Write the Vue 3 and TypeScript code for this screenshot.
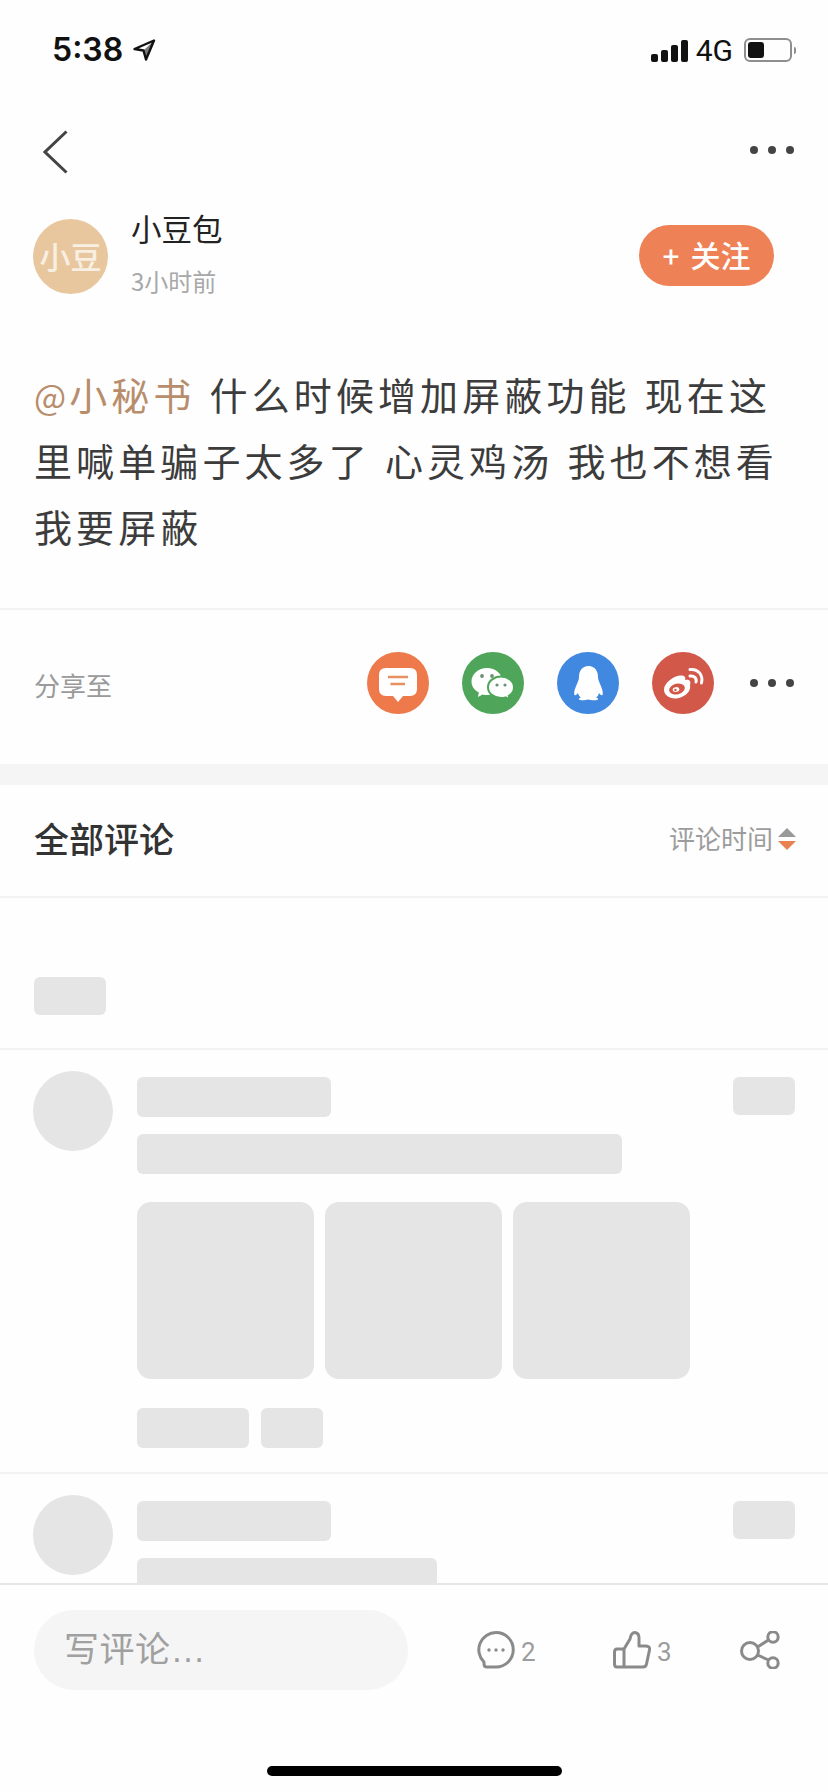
<template>
  <div class="page">
    <div class="status">
      <span class="clock">5:38</span>
      <svg class="loc" width="23" height="22" viewBox="0 0 23 22">
        <path d="M21 1.5 L1.5 10 L10.5 11.5 L13 20.5 Z" fill="none" stroke="#111" stroke-width="2.4" stroke-linejoin="round" />
        <path d="M21 1.5 L10.5 11.5 L13 20.5 Z" fill="#111" opacity="0.55" />
      </svg>
      <span class="grow"></span>
      <div class="signal">
        <i v-for="h in signal" :key="h" :style="{ height: h + 'px' }"></i>
      </div>
      <span class="net">4G</span>
      <div class="battery"><i></i></div>
      <span class="battery-tip"></span>
    </div>

    <div class="nav">
      <svg width="26" height="44" viewBox="0 0 26 44">
        <path d="M23.5 1.5 L2 22 L23.5 42.5" fill="none" stroke="#444" stroke-width="3" />
      </svg>
      <div class="dots"><i></i><i></i><i></i></div>
    </div>

    <div class="scroll">
      <div class="author">
        <div class="avatar">小豆</div>
        <div class="author-info">
          <div class="author-name">小豆包</div>
          <div class="author-time">3小时前</div>
        </div>
        <div class="follow"><span class="plus">+</span>关注</div>
      </div>

      <div class="post">
        <span class="mention"><span class="at">@</span>小秘书</span> 什么时候增加屏蔽功能 现在这里喊单骗子太多了 心灵鸡汤 我也不想看我要屏蔽
      </div>

      <div class="share">
        <span class="share-label">分享至</span>
        <div class="share-icons">
          <svg width="62" height="62" viewBox="0 0 62 62">
            <circle cx="31" cy="31" r="31" fill="#ee7a4b" />
            <path d="M19 16 H43 Q50 16 50 23 V37 Q50 44 43 44 H36 L31 50 L26 44 H19 Q12 44 12 37 V23 Q12 16 19 16Z" fill="#fff" />
            <path d="M21 25 H41 M23.5 32 H38" stroke="#e8905f" stroke-width="2.4" />
          </svg>
          <svg width="62" height="62" viewBox="0 0 62 62">
            <circle cx="31" cy="31" r="31" fill="#4fa65a" />
            <path d="M25 16 C33.5 16 40.5 22 40.5 29.5 C40.5 37 33.5 43 25 43 C23.5 43 22 42.8 20.6 42.4 L16 45 L16.8 40.6 C12.4 38.2 9.5 34.2 9.5 29.5 C9.5 22 16.5 16 25 16Z" fill="#fff" />
            <path d="M39 24.5 C46.2 24.5 52 29.3 52 35.2 C52 38.8 50 41.8 46.8 43.8 L47.5 47.5 L43.6 45.4 C42.2 45.8 40.6 46 39 46 C31.8 46 26 41.2 26 35.2 C26 29.3 31.8 24.5 39 24.5Z" fill="#fff" stroke="#4fa65a" stroke-width="2" />
            <circle cx="20" cy="24" r="1.9" fill="#6e8f72" />
            <circle cx="30" cy="24" r="1.9" fill="#6e8f72" />
            <circle cx="35" cy="33" r="1.6" fill="#6e8f72" />
            <circle cx="43" cy="33" r="1.6" fill="#6e8f72" />
          </svg>
          <svg width="62" height="62" viewBox="0 0 62 62">
            <circle cx="31" cy="31" r="31" fill="#4088e0" />
            <path d="M31.5 14 C25 14 22 19 22 25 C22 28 21 29 20 32 C18 36 16.5 41 17.5 43 C18.5 44 20 42.5 21 41 C21.5 43 22.5 44.5 24 45.5 C22 46 21 47 23 48 C26 48.5 29 48 31 47.5 C33 48 37 48.5 40 48 C42 47 41 46 39 45.5 C40.5 44.5 41.5 43 42 41 C43 42.5 44.5 44 45.5 43 C46.5 41 45 36 43 32 C42 29 41 28 41 25 C41 19 38 14 31.5 14Z" fill="#fff" />
          </svg>
          <svg width="62" height="62" viewBox="0 0 62 62">
            <circle cx="31" cy="31" r="31" fill="#d2594a" />
            <path d="M12 37.5 C12 31 22 23 30 23.5 C34 24 33.5 27 33 28 C37 27 39.5 29 38 33 C39.5 41 30 46.5 23 46.5 C17 46.5 12 43 12 37.5Z" fill="#fff" />
            <ellipse cx="25" cy="37" rx="8" ry="5.4" transform="rotate(-14 25 37)" fill="#d2594a" />
            <ellipse cx="24" cy="37.5" rx="3.4" ry="2.4" transform="rotate(-14 24 37.5)" fill="#fff" />
            <circle cx="23.4" cy="38" r="1.2" fill="#d2594a" />
            <path d="M38 17.5 C46 16.5 51.5 23 49.5 31 M38 24 C42 23.5 45 26 44 30" fill="none" stroke="#fff" stroke-width="3" stroke-linecap="round" />
          </svg>
        </div>
        <div class="dots"><i></i><i></i><i></i></div>
      </div>

      <div class="band"></div>

      <div class="comments-head">
        <span class="comments-title">全部评论</span>
        <span class="sort-label">评论时间</span>
        <span class="sort"><i class="up"></i><i class="down"></i></span>
      </div>

      <div class="tag-row"><div class="bone tag"></div></div>

      <div v-for="item in comments" :key="item.id" class="comment">
        <div class="comment-avatar"></div>
        <div class="comment-main">
          <div class="bone name"></div>
          <div class="bone line" :style="{ width: item.line + 'px' }"></div>
          <template v-if="item.images">
            <div class="images">
              <div v-for="n in 3" :key="n" class="bone image"></div>
            </div>
            <div class="foot">
              <div class="bone foot-a"></div>
              <div class="bone foot-b"></div>
            </div>
          </template>
        </div>
        <div class="bone stamp"></div>
      </div>
    </div>

    <div class="bottom">
      <div class="bottom-row">
        <div class="input-cell"><div class="input">写评论…</div></div>
        <div class="action">
          <svg width="38" height="38" viewBox="0 0 38 38" fill="none" stroke="#8a8a8a" stroke-width="3">
            <path d="M19 1.5 A17.2 17.2 0 0 1 19 36 H10 C8 36 7 35 7 33 V31 A17.2 17.2 0 0 1 19 1.5Z" stroke-linejoin="round" />
            <circle cx="12" cy="19" r="1.7" fill="#8a8a8a" stroke="none" />
            <circle cx="19" cy="19" r="1.7" fill="#8a8a8a" stroke="none" />
            <circle cx="26" cy="19" r="1.7" fill="#8a8a8a" stroke="none" />
          </svg>
          <span>2</span>
        </div>
        <div class="action">
          <svg width="38" height="38" viewBox="0 0 38 38" fill="none" stroke="#8a8a8a" stroke-width="3" stroke-linejoin="round">
            <path d="M11 18 L17 8 Q18 1.5 22 1.5 Q26 2 26 7 V15 H33 Q37 15 36.5 19 L33.5 33 Q33 36 30 36 H4 Q1.5 36 1.5 33 V21 Q1.5 18 4 18 H11 V36" />
          </svg>
          <span>3</span>
        </div>
        <svg width="40" height="38" viewBox="0 0 40 38" fill="none" stroke="#8a8a8a" stroke-width="3">
          <circle cx="10" cy="20" r="8.5" />
          <circle cx="33" cy="6" r="5.2" />
          <circle cx="33" cy="32" r="5.2" />
          <path d="M17.5 16 L28.5 9 M17.5 24 L28.5 29" />
        </svg>
      </div>
      <div class="home"></div>
    </div>
  </div>
</template>

<script setup lang="ts">
const signal = [8, 12, 17, 22];

const comments = [
  { id: 1, line: 485, images: true },
  { id: 2, line: 300, images: false },
];
</script>

<style scoped>
.page { width: 828px; height: 1792px; display: flex; flex-direction: column; overflow: hidden; background: #fefefe; font-family: "Noto Sans CJK SC", "Noto Sans", sans-serif; color: #3a3a3a; }
.status { height: 100px; flex: none; display: flex; align-items: center; padding: 0 32px 0 52px; box-sizing: border-box; color: #111; }
.clock { font: 600 32px/1 Inter, sans-serif; }
.loc { margin-left: 10px; }
.grow { flex: 1; }
.signal { display: flex; align-items: flex-end; gap: 3px; height: 22px; margin-top: 1px; }
.signal i { width: 7px; background: #111; border-radius: 2px; }
.net { font: 400 30px/1 Roboto, sans-serif; margin-left: 8px; margin-top: 2px; }
.battery { width: 48px; height: 24px; margin-left: 11px; box-sizing: border-box; border: 2px solid #8e8e8e; border-radius: 6px; padding: 2px; }
.battery i { display: block; width: 16px; height: 16px; background: #111; border-radius: 3px; }
.battery-tip { width: 2px; height: 7px; margin-left: 2px; background: #8e8e8e; border-radius: 0 2px 2px 0; }

.nav { height: 104px; flex: none; display: flex; align-items: center; justify-content: space-between; padding: 0 34px 0 43px; box-sizing: border-box; }
.nav .dots { margin-top: -4px; }
.dots { display: flex; gap: 10px; }
.dots i { width: 8px; height: 8px; border-radius: 50%; background: #444; }

.scroll { flex: 1; min-height: 0; overflow: hidden; }
.author { height: 104px; display: flex; align-items: center; padding: 0 54px 0 33px; box-sizing: border-box; }
.avatar { width: 75px; height: 75px; flex: none; border-radius: 50%; background: #e9c79e; color: rgba(255, 255, 255, 0.72); font-size: 31px; font-weight: 500; line-height: 73px; text-align: center; }
.author-info { flex: 1; margin-left: 23px; margin-top: -6px; }
.author-name { font-size: 30.5px; line-height: 40px; color: #222; }
.author-time { font-size: 24px; line-height: 34px; margin-top: 16px; color: #a8a8a8; }
.follow { width: 135px; height: 61px; margin-top: -2px; border-radius: 31px; background: #ee8256; color: #fff; font-size: 30px; font-weight: 500; line-height: 58px; text-align: center; }
.plus { margin-right: 11px; font-family: Roboto, sans-serif; font-weight: 400; }

.post { padding: 53px 34px 49px; font-size: 38px; line-height: 66px; letter-spacing: 4.1px; word-spacing: 1.5px; color: #3c3c3c; border-bottom: 2px solid #f3f3f3; }
.mention { color: #b88d6b; }
.at { font-size: 34px; line-height: 1; letter-spacing: 3px; }

.share { height: 154px; box-sizing: border-box; display: flex; align-items: center; padding: 0 34px 9px 34px; }
.share-label { flex: 1; font-size: 26px; color: #9a9a9a; margin-top: 3px; }
.share-icons { display: flex; gap: 33px; margin-right: 36px; }
.band { height: 21px; background: #f5f5f5; }

.comments-head { height: 113px; box-sizing: border-box; border-bottom: 2px solid #f3f3f3; display: flex; align-items: center; padding: 0 32px 6px 34px; }
.comments-title { flex: 1; font-size: 35px; font-weight: 500; color: #333; }
.sort-label { font-size: 26px; color: #9c9c9c; }
.sort { display: flex; flex-direction: column; gap: 4px; margin-left: 5px; margin-top: 3px; }
.sort i { width: 0; height: 0; border-left: 9px solid transparent; border-right: 9px solid transparent; }
.sort .up { border-bottom: 9px solid #999; }
.sort .down { border-top: 9px solid #e8804f; }

.bone { background: #e5e5e5; border-radius: 6px; }
.tag-row { height: 152px; box-sizing: border-box; padding: 79px 0 0 34px; border-bottom: 2px solid #f3f3f3; }
.tag { width: 72px; height: 38px; }
.comment { display: flex; padding: 21px 33px 24px 33px; border-bottom: 2px solid #f3f3f3; }
.comment-avatar { width: 80px; height: 80px; flex: none; border-radius: 50%; background: #e5e5e5; }
.comment-main { flex: 1; margin-left: 24px; padding-top: 6px; }
.name { width: 194px; height: 40px; }
.line { height: 40px; margin-top: 17px; }
.images { display: flex; gap: 11px; margin-top: 28px; }
.image { width: 177px; height: 177px; border-radius: 14px; }
.foot { display: flex; gap: 12px; margin-top: 29px; }
.foot-a { width: 112px; height: 40px; }
.foot-b { width: 62px; height: 40px; }
.stamp { width: 62px; height: 38px; flex: none; margin-top: 6px; }

.bottom { flex: none; border-top: 2px solid #e6e6e6; background: #fefefe; padding-top: 25px; display: flex; flex-direction: column; }
.bottom-row { display: grid; grid-template-columns: 443px 136px 127px 40px; align-items: center; padding-left: 34px; height: 80px; }
.input { width: 374px; height: 80px; border-radius: 40px; background: #f5f5f5; box-sizing: border-box; padding-left: 30px; font-family: "Liberation Sans", "Noto Sans CJK SC", sans-serif; font-size: 35px; letter-spacing: 0.5px; line-height: 80px; color: #a0a0a0; }
.action { display: flex; align-items: center; gap: 6px; color: #9c9c9c; font: 400 26px/1 Roboto, sans-serif; }
.action span { margin-top: 3px; }
.home { width: 295px; height: 10px; border-radius: 5px; background: #000; margin: 76px auto 16px; }
</style>
